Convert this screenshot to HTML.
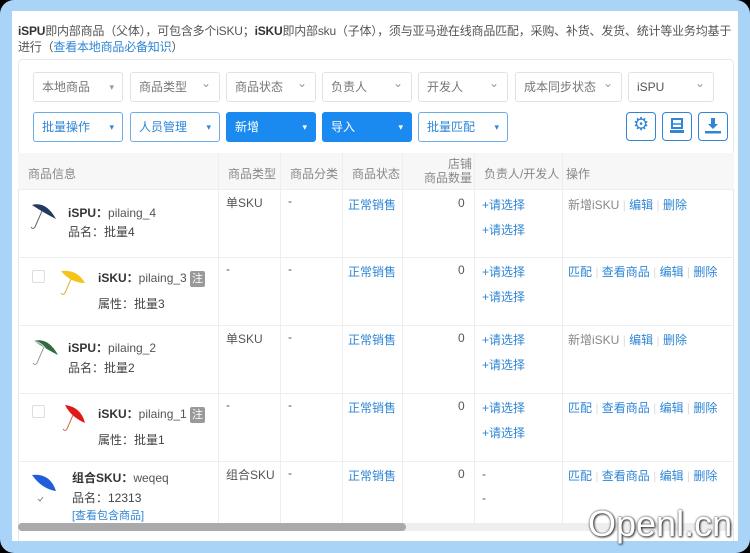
<!DOCTYPE html><html><head><meta charset="utf-8"><style>
*{box-sizing:border-box;margin:0;padding:0}
body{width:750px;height:553px;background:#000;font-family:"Liberation Sans","Noto Sans CJK SC",sans-serif;font-size:12px;color:#555;position:relative;overflow:hidden}
.frame{position:absolute;left:0;top:0;width:750px;height:553px;background:#a9d3f7;border-radius:14px}
.panel{position:absolute;left:12px;top:11px;width:726px;height:530px;background:#fff;overflow:hidden}
.a{position:absolute}
.note{left:6px;top:12px;width:724px;line-height:16px;font-size:12px;letter-spacing:-0.2px;color:#555;white-space:nowrap}
.box{left:6px;top:48px;width:716px;height:500px;border:1px solid #e8e8e8;border-radius:4px}
.dd{position:absolute;height:30px;border:1px solid #e2e2e2;border-radius:3px;padding-left:8px;line-height:28px;color:#777;font-size:12px}
.dd:after{content:"⌄";position:absolute;right:8px;top:-4px;color:#999}
.dd.c:after{content:"▾";top:0;font-size:9px}
.bl{border-color:#6aaee8;color:#2f86d6}
.bf{background:#1b8af0;border-color:#1b8af0;color:#fff}
.bf:after,.bl:after{color:inherit}
.ib{position:absolute;top:101px;width:30px;height:29px;border:1.5px solid #2f86d6;border-radius:4px}
.th{top:142px;left:6px;width:716px;height:37px;background:#f7f7f7;border-bottom:1px solid #eee}
.h{position:absolute;top:12px;color:#888}
.row{left:6px;width:716px;border-bottom:1px solid #eee}
.vl{position:absolute;top:142px;width:1px;height:375px;background:#eee}
.lk{color:#2f86d6}
.t{position:absolute}
.g{color:#888}
.z{display:inline-block;background:#999;color:#fff;font-size:11px;padding:0 2px;border-radius:2px;line-height:16px}
.cb{position:absolute;width:13px;height:13px;border:1px solid #ddd;border-radius:2px}
</style></head><body><div class="frame"></div><div class="panel">
<div class="a note"><b style="color:#333">iSPU</b>即内部商品（父体），可包含多个iSKU；<b style="color:#333">iSKU</b>即内部sku（子体），须与亚马逊在线商品匹配，采购、补货、发货、统计等业务均基于<br>进行（<span class="lk">查看本地商品必备知识</span>）</div>
<div class="a box"></div>
<div class="dd c" style="left:21px;top:61px;width:90px">本地商品</div>
<div class="dd" style="left:118px;top:61px;width:90px">商品类型</div>
<div class="dd" style="left:214px;top:61px;width:90px">商品状态</div>
<div class="dd" style="left:310px;top:61px;width:90px">负责人</div>
<div class="dd" style="left:406px;top:61px;width:90px">开发人</div>
<div class="dd" style="left:503px;top:61px;width:107px">成本同步状态</div>
<div class="dd" style="left:616px;top:61px;width:86px;color:#555">iSPU</div>
<div class="dd c bl" style="left:21px;top:101px;width:90px">批量操作</div>
<div class="dd c bl" style="left:118px;top:101px;width:90px">人员管理</div>
<div class="dd c bf" style="left:214px;top:101px;width:90px">新增</div>
<div class="dd c bf" style="left:310px;top:101px;width:90px">导入</div>
<div class="dd c bl" style="left:406px;top:101px;width:90px">批量匹配</div>
<div class="ib" style="left:614px"><span class="a" style="left:6px;top:1px;color:#2f86d6;font-size:18px">⚙</span></div>
<div class="ib" style="left:650px"><svg class="a" style="left:7px;top:5px" width="14" height="17"><rect x="2" y="1" width="10" height="9" fill="none" stroke="#2f86d6" stroke-width="2"/><line x1="2" y1="6" x2="12" y2="6" stroke="#2f86d6" stroke-width="1.5"/><rect x="0" y="12" width="14" height="3" fill="#2f86d6"/></svg></div>
<div class="ib" style="left:686px"><svg class="a" style="left:6px;top:4px" width="16" height="18"><path d="M6 1h4v6h3l-5 5-5-5h3z" fill="#2f86d6"/><rect x="0" y="14" width="16" height="2.5" fill="#2f86d6"/></svg></div>
<div class="a th"><span class="h" style="left:10px">商品信息</span><span class="h" style="left:210px">商品类型</span><span class="h" style="left:272px">商品分类</span><span class="h" style="left:334px">商品状态</span><span class="h" style="left:406px;top:4px;line-height:14px;text-align:right">店铺<br>商品数量</span><span class="h" style="left:466px">负责人/开发人</span><span class="h" style="left:548px">操作</span></div>
<div class="vl" style="left:206px"></div><div class="vl" style="left:268px"></div><div class="vl" style="left:330px"></div><div class="vl" style="left:390px"></div><div class="vl" style="left:462px"></div><div class="vl" style="left:550px"></div>
<div class="a row" style="top:179px;height:68px"></div>
<div class="a row" style="top:247px;height:68px"></div>
<div class="a row" style="top:315px;height:68px"></div>
<div class="a row" style="top:383px;height:68px"></div>
<svg class="a" style="left:18px;top:190px" width="30" height="32"><path d="M2 4Q16 0 26 18Q14 12 2 4z" fill="#233a5e"/><path d="M12 10L5 26q-2 3-4 0" stroke="#666" fill="none"/></svg>
<div class="t" style="left:56px;top:193px"><b style="color:#333">iSPU：</b>pilaing_4</div><div class="t" style="left:56px;top:212px;color:#444">品名：批量4</div>
<div class="t" style="left:214px;top:183px">单SKU</div><div class="t" style="left:276px;top:183px">-</div><div class="t lk" style="left:336px;top:185px">正常销售</div><div class="t" style="left:446px;top:185px">0</div>
<div class="t lk" style="left:470px;top:185px">+请选择</div><div class="t lk" style="left:470px;top:210px">+请选择</div>
<div class="t" style="left:556px;top:185px"><span class="g">新增iSKU</span> <span style="color:#ddd">|</span> <span class="lk">编辑</span> <span style="color:#ddd">|</span> <span class="lk">删除</span></div>
<div class="cb" style="left:20px;top:259px"></div>
<svg class="a" style="left:47px;top:256px" width="30" height="32"><path d="M2 4Q18 2 26 16Q12 16 2 4z" fill="#f4c418"/><path d="M12 12L6 26q-2 3-4 0" stroke="#dcb030" fill="none"/></svg>
<div class="t" style="left:86px;top:258px"><b style="color:#333">iSKU：</b>pilaing_3 <span class="z">注</span></div><div class="t" style="left:86px;top:284px;color:#444">属性：批量3</div>
<div class="t" style="left:214px;top:251px">-</div><div class="t" style="left:276px;top:251px">-</div><div class="t lk" style="left:336px;top:252px">正常销售</div><div class="t" style="left:446px;top:252px">0</div>
<div class="t lk" style="left:470px;top:252px">+请选择</div><div class="t lk" style="left:470px;top:277px">+请选择</div>
<div class="t lk" style="left:556px;top:252px">匹配 <span style="color:#ddd">|</span> 查看商品 <span style="color:#ddd">|</span> 编辑 <span style="color:#ddd">|</span> 删除</div>
<svg class="a" style="left:20px;top:326px" width="30" height="32"><path d="M2 4Q16 0 26 18Q14 12 2 4z" fill="#2e6b3e"/><path d="M2 4Q10 6 14 12" stroke="#ddd" fill="none"/><path d="M12 10L5 26q-2 3-4 0" stroke="#999" fill="none"/></svg>
<div class="t" style="left:56px;top:328px"><b style="color:#333">iSPU：</b>pilaing_2</div><div class="t" style="left:56px;top:348px;color:#444">品名：批量2</div>
<div class="t" style="left:214px;top:319px">单SKU</div><div class="t" style="left:276px;top:319px">-</div><div class="t lk" style="left:336px;top:320px">正常销售</div><div class="t" style="left:446px;top:320px">0</div>
<div class="t lk" style="left:470px;top:320px">+请选择</div><div class="t lk" style="left:470px;top:345px">+请选择</div>
<div class="t" style="left:556px;top:320px"><span class="g">新增iSKU</span> <span style="color:#ddd">|</span> <span class="lk">编辑</span> <span style="color:#ddd">|</span> <span class="lk">删除</span></div>
<div class="cb" style="left:20px;top:394px"></div>
<svg class="a" style="left:49px;top:392px" width="30" height="32"><path d="M4 2Q20 4 24 20Q10 14 4 2z" fill="#e01818"/><path d="M12 12L6 26q-2 3-4 0" stroke="#e06040" fill="none"/></svg>
<div class="t" style="left:86px;top:394px"><b style="color:#333">iSKU：</b>pilaing_1 <span class="z">注</span></div><div class="t" style="left:86px;top:420px;color:#444">属性：批量1</div>
<div class="t" style="left:214px;top:387px">-</div><div class="t" style="left:276px;top:387px">-</div><div class="t lk" style="left:336px;top:388px">正常销售</div><div class="t" style="left:446px;top:388px">0</div>
<div class="t lk" style="left:470px;top:388px">+请选择</div><div class="t lk" style="left:470px;top:413px">+请选择</div>
<div class="t lk" style="left:556px;top:388px">匹配 <span style="color:#ddd">|</span> 查看商品 <span style="color:#ddd">|</span> 编辑 <span style="color:#ddd">|</span> 删除</div>
<svg class="a" style="left:18px;top:460px" width="30" height="34"><path d="M2 4Q20 2 26 20Q12 18 2 4z" fill="#1e5ed8"/><path d="M8 28l2 2 3-4" stroke="#888" fill="none"/></svg>
<div class="t" style="left:60px;top:458px"><b style="color:#333">组合SKU：</b>weqeq</div><div class="t" style="left:60px;top:478px;color:#444">品名：12313</div><div class="t lk" style="left:60px;top:496px;font-size:11px">[查看包含商品]</div>
<div class="t" style="left:214px;top:455px">组合SKU</div><div class="t" style="left:276px;top:455px">-</div><div class="t lk" style="left:336px;top:456px">正常销售</div><div class="t" style="left:446px;top:456px">0</div>
<div class="t" style="left:470px;top:456px">-</div><div class="t" style="left:470px;top:480px">-</div>
<div class="t lk" style="left:556px;top:456px">匹配 <span style="color:#ddd">|</span> 查看商品 <span style="color:#ddd">|</span> 编辑 <span style="color:#ddd">|</span> 删除</div>
<div class="a" style="left:6px;top:512px;width:716px;height:8px;background:#eee;border-radius:4px"></div>
<div class="a" style="left:6px;top:512px;width:388px;height:8px;background:#aaa;border-radius:4px"></div>
</div>
<div class="a" style="left:588px;top:503px;font-size:36px;color:#fff;font-family:'Liberation Sans',sans-serif;text-shadow:0 0 2px #333,1px 1px 2px #333">Openl.cn</div>
</body></html>
